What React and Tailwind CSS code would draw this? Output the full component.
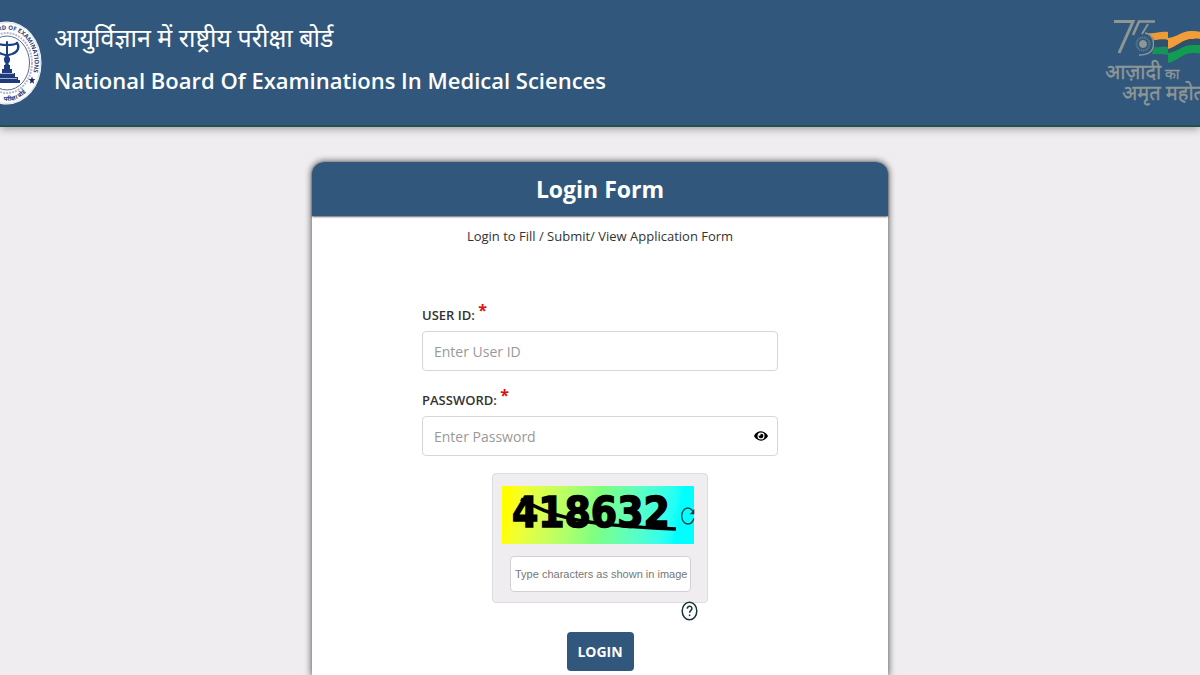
import React, { useState } from 'react';
import { FaEye, FaEyeSlash } from 'react-icons/fa';

function BoardLogo() {
  return (
    <svg viewBox="0 0 70 84" className="w-[70px] h-[84px] shrink-0" role="img" aria-label="NBEMS">
      <defs>
        <path id="ring-outer" d="M7.500 42 A27.500 33.500 0 0 1 62.500 42 A27.500 33.500 0 0 1 35 75.500" />
        <path id="ring-bottom" d="M5 42 A30 38 0 0 0 65 42" />
      </defs>
      <ellipse cx="35" cy="42" rx="34.500" ry="41.500" fill="#fff" />
      <ellipse cx="35" cy="42" rx="33.500" ry="40.500" fill="none" stroke="#c3cbe0" strokeWidth="0.600" />
      <ellipse cx="35" cy="42" rx="22.500" ry="27" fill="#fff" stroke="#5d6a92" strokeWidth="1" />
      <ellipse cx="35" cy="42" rx="25" ry="30" fill="none" stroke="#b4bbcd" strokeWidth="2" strokeDasharray="2 1" />
      <g fill="#2b3a70">
        <text fontSize="6" fontWeight="700" fontFamily='"Open Sans", sans-serif'>
          <textPath href="#ring-outer" startOffset="26">BOARD OF EXAMINATIONS</textPath>
        </text>
        <text fontSize="6" fontWeight="700" fontFamily='"Noto Sans", sans-serif'>
          <textPath href="#ring-bottom" startOffset="50">परीक्षा बोर्ड</textPath>
        </text>
      </g>
      <path d="M60 55.500l1 2.600h2.300l-1.800 1.900.7 2.800-2.200-1.600-2.200 1.600.7-2.800-1.800-1.900h2.300z" fill="#1e2d62" />
      {/* serpents, staff and stepped pedestal */}
      <g fill="none" stroke="#1c3f86" strokeLinecap="round">
        <path d="M35 21v38" strokeWidth="2" />
        <path d="M25 22c2 2 6 2 10 2s8 0 10-2" strokeWidth="2.200" />
        <path d="M45 22c3 4 1 9-5 11-5 1-7 3-7 6s4 4 4 8" strokeWidth="2.200" />
        <path d="M25 22c-3 4-1 9 5 11 5 1 7 3 7 6s-4 4-4 8" strokeWidth="2.200" />
      </g>
      <path d="M32 44h6v4h2v4h3v4h3v3h2v3H22v-3h2v-3h3v-4h3v-4h2z" fill="#1f3b7c" />
      <path d="M28 52.500h14M25 57.500h20" stroke="#dfe5f2" strokeWidth="0.700" />
    </svg>
  );
}

function AmritLogo() {
  return (
    <svg viewBox="0 0 130 92" className="w-[130px] h-[92px] shrink-0 -mr-[34px]" role="img" aria-label="Azadi Ka Amrit Mahotsav">
      <g fill="none" stroke="#8f9796">
        <path d="M10 5.500H29L15 37" strokeWidth="3" />
        <path d="M51 5.500H35L29 19" strokeWidth="2.500" />
        <path d="M44 8L38 18" strokeWidth="1.800" />
        <path d="M41 17c6 1 9 6 8.500 12s-5 10-14.500 10" strokeWidth="1.400" />
        <circle cx="39" cy="28" r="6.500" strokeWidth="2" strokeDasharray="1 0.800" opacity="0.600" />
        <circle cx="39" cy="28" r="3.500" fill="#8f9796" strokeWidth="1" />
      </g>
      <path d="M44 17c7 1 12-2 20-1v8c-6-1-9 0-14 0-1-3-3-5-6-7z" fill="#ee9b36" />
      <path d="M50 24c5 0 8-1 14 0v7c-6-1-9 1-14 0z" fill="#31506d" />
      <path d="M50 31c5 1 8-1 14 0v8c-6-2-12 0-16-1z" fill="#16935a" />
      <path d="M64 22c10-1 14-8 25-7 12 1 22 4 41 0v8c-19 3-29-1-41 0-11 0-15 8-25 11z" fill="#f29d35" />
      <path d="M64 33c10-3 14-10 25-10 12-1 22 3 41 0v7c-19 3-29-1-41-1-11 0-15 7-25 9z" fill="#31506d" />
      <path d="M64 37c10-1 14-8 25-8 12 0 22 3 41 1v8c-19 3-29-1-41-1-11 0-15 8-25 10z" fill="#129b52" />
      <g fill="#8f9796" stroke="#8f9796" strokeWidth="0.300" fontFamily='"Noto Sans", sans-serif'>
        <text x="1" y="63" fontSize="20">आज़ादी</text>
        <text x="61" y="63" fontSize="14">का</text>
        <text x="18" y="84" fontSize="20">अमृत महोत्सव</text>
      </g>
    </svg>
  );
}

function FieldLabel({ htmlFor, children }) {
  return (
    <label htmlFor={htmlFor} className="block text-[13px] leading-6 font-semibold text-[#333]">
      {children} <sup className="-top-1 text-[16px] font-bold text-[#e01010]">*</sup>
    </label>
  );
}

function Captcha({ code, onRefresh }) {
  return (
    <div className="relative ml-[9px] mr-[13px] h-[58px] bg-linear-100 from-[#ffff00] from-5% via-[#7dff80] via-50% to-[#00ffff] to-90%">
      <svg viewBox="0 0 192 58" className="w-full h-full" role="img" aria-label="Captcha">
        <text
          x="10"
          y="41"
          fontSize="42"
          fontWeight="700"
          stroke="#000"
          strokeWidth="1.500"
          fontFamily='"DejaVu Sans Condensed", "DejaVu Sans", sans-serif'
        >
          {code}
        </text>
        <path d="M19 13C50 30 72 39 174 43" fill="none" stroke="#000" strokeWidth="3.500" />
      </svg>
      <button
        type="button"
        aria-label="Refresh captcha"
        onClick={onRefresh}
        className="absolute -right-[2px] top-[20px] cursor-pointer"
      >
        <svg viewBox="0 0 16 20" className="w-[16px] h-[20px]" fill="none" stroke="#173a42" strokeWidth="1.300">
          <path d="M13.500 6.500C12 3.500 10 2 7.800 2 4.300 2 1.700 5.500 1.700 10s2.600 8 6.100 8c3 0 5.200-2.200 6-5.500" />
          <path d="M14.300 3v5.200h-4.500z" fill="#173a42" stroke="none" />
        </svg>
      </button>
    </div>
  );
}

export default function App() {
  const [code, setCode] = useState('418632');
  const [showPassword, setShowPassword] = useState(false);

  const refreshCode = () => {
    setCode(String(Math.floor(100000 + Math.random() * 900000)));
  };

  return (
    <div className="min-h-screen flex flex-col overflow-hidden bg-[#efedf0] font-['Open_Sans','Noto_Sans',sans-serif] text-[#333]">
      <header className="flex items-start justify-between h-[127px] bg-[#31587c] border-b-2 border-[#22504f] shadow-[0_2px_8px_rgba(0,0,0,0.35)] overflow-hidden">
        <div className="flex items-start gap-3 -ml-7 pt-[21px] text-white">
          <BoardLogo />
          <div className="whitespace-nowrap">
            <p className="text-[25px] leading-[32px] font-['Noto_Sans',sans-serif]">आयुर्विज्ञान में राष्ट्रीय परीक्षा बोर्ड</p>
            <h1 className="mt-2 text-[22px] leading-[38px] font-semibold">
              National Board Of Examinations In Medical Sciences
            </h1>
          </div>
        </div>
        <div className="pt-4">
          <AmritLogo />
        </div>
      </header>

      <main className="flex-1 flex flex-col items-center pt-[35px]">
        <section className="flex-1 w-[48%] bg-white rounded-t-xl shadow-[0_0_6px_1px_rgba(0,0,0,0.6)]">
          <h2 className="h-[54px] rounded-t-xl bg-[#31587c] shadow-[0_1px_2px_rgba(0,0,0,0.6)] text-center text-[23px] leading-[54px] font-bold text-white">
            Login Form
          </h2>
          <p className="mt-2 text-center text-[13px] leading-6">Login to Fill / Submit/ View Application Form</p>

          <form className="mt-[55px] mx-[110px] pb-1" onSubmit={(e) => e.preventDefault()}>
            <FieldLabel htmlFor="userId">USER ID:</FieldLabel>
            <input
              id="userId"
              type="text"
              placeholder="Enter User ID"
              className="mt-1 block w-full h-10 px-[11px] rounded border border-[#d8d6dc] bg-white text-[14px] placeholder:text-[#999]"
            />

            <div className="mt-[17px]">
              <FieldLabel htmlFor="password">PASSWORD:</FieldLabel>
              <div className="relative mt-1">
                <input
                  id="password"
                  type={showPassword ? 'text' : 'password'}
                  placeholder="Enter Password"
                  className="block w-full h-10 pl-[11px] pr-10 rounded border border-[#d8d6dc] bg-white text-[14px] placeholder:text-[#999]"
                />
                <button
                  type="button"
                  aria-label="Show password"
                  onClick={() => setShowPassword(!showPassword)}
                  className="absolute right-[10px] top-[13px] cursor-pointer text-black"
                >
                  {showPassword ? <FaEyeSlash size={14} /> : <FaEye size={14} />}
                </button>
              </div>
            </div>

            <div className="mt-[17px] mx-auto w-[216px] h-[130px] pt-[12px] rounded-sm border border-[#dddbe0] bg-[#efedf0]">
              <Captcha code={code} onRefresh={refreshCode} />
              <input
                type="text"
                aria-label="Captcha"
                placeholder="Type characters as shown in image"
                className="mt-3 ml-[17px] block w-[181px] h-9 pl-1 rounded border border-[#d2d0d6] bg-white font-['Liberation_Sans',Arial,sans-serif] text-[11px] placeholder:text-[#777]"
              />
            </div>
            <div className="mx-auto w-[216px] flex justify-end pr-[10px]">
              <button type="button" aria-label="Help" className="-mt-[2px] cursor-pointer">
                <svg viewBox="0 0 17 20" className="w-[17px] h-[20px]" fill="none" stroke="#1c3338" strokeWidth="1.500">
                  <ellipse cx="8.500" cy="10" rx="7.300" ry="8.800" />
                  <path d="M6.300 7.800c0-3.400 4.600-3.300 4.600-.4 0 2-2.300 2-2.300 4.300" />
                  <path d="M8.600 13.500v1.600" />
                </svg>
              </button>
            </div>

            <button
              type="submit"
              className="mt-[11px] mx-auto block w-[67px] h-[39px] rounded bg-[#31587c] text-[14px] font-bold text-white cursor-pointer"
            >
              LOGIN
            </button>
          </form>
        </section>
      </main>
    </div>
  );
}
